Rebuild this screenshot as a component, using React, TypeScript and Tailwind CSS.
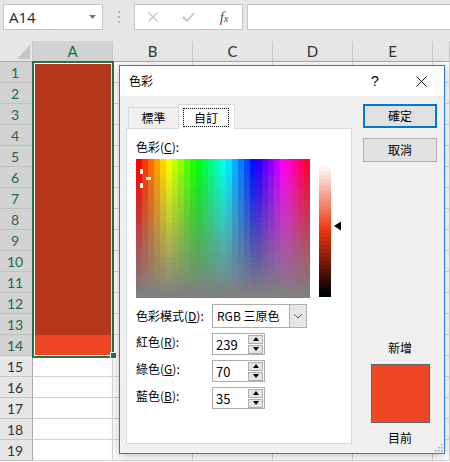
import React from "react";

const cjk = "font-['Noto_Sans_CJK_TC','Noto_Sans',sans-serif]";

function Spectrum() {
  const cols = 29;
  const rows = 24;
  const cw = 174 / cols;
  const rh = 139 / rows;
  const rects: React.ReactNode[] = [];
  for (let j = 0; j < rows; j++) {
    for (let i = 0; i < cols; i++) {
      const h = (i * 360) / cols;
      const s = 100 * (1 - j / (rows - 1));
      rects.push(
        <rect
          key={`${i}-${j}`}
          x={i * cw}
          y={j * rh}
          width={cw + 0.6}
          height={rh + 0.6}
          fill={`hsl(${h.toFixed(1)},${s.toFixed(1)}%,50%)`}
        />
      );
    }
  }
  return (
    <svg width="174" height="139" shapeRendering="crispEdges" className="block">
      {rects}
      <rect x="4" y="10" width="3" height="5" fill="#fff" />
      <rect x="10" y="18" width="5" height="3" fill="#fff" />
      <rect x="4" y="24" width="3" height="5" fill="#fff" />
    </svg>
  );
}

function LumBar() {
  const steps = 34;
  const h = 133 / steps;
  const rects: React.ReactNode[] = [];
  for (let k = 0; k < steps; k++) {
    const l = 100 * (1 - k / (steps - 1));
    rects.push(
      <rect key={k} x="0" y={4 + k * h} width="12" height={h + 0.6} fill={`hsl(10,86%,${l.toFixed(1)}%)`} />
    );
  }
  return (
    <svg width="22" height="139" shapeRendering="crispEdges" className="block">
      {rects}
      <polygon points="15,67 22,62.5 22,71.5" fill="#000" shapeRendering="auto" />
    </svg>
  );
}

function Spin({ v }: { v: string }) {
  return (
    <div className="flex h-[22px] w-[53px] items-center border border-[#adadad] bg-white pl-[3px] pr-[1px]">
      <span className="flex-1 text-[13px] leading-none text-black">{v}</span>
      <div className="flex flex-col gap-[1px]">
        <div className="flex h-[9px] w-[15px] items-center justify-center border border-[#adadad] bg-[#e5e5e5]">
          <svg width="6" height="4"><polygon points="0,4 6,4 3,0" fill="#000" /></svg>
        </div>
        <div className="flex h-[9px] w-[15px] items-center justify-center border border-[#adadad] bg-[#e5e5e5]">
          <svg width="6" height="4"><polygon points="0,0 6,0 3,4" fill="#000" /></svg>
        </div>
      </div>
    </div>
  );
}

function FormulaBar() {
  return (
    <div className="flex h-[41px] items-start bg-[#e6e6e6] pl-[3px] pt-[4px]">
      <div className="flex h-[26px] w-[100px] items-center justify-between border border-[#c6c6c6] bg-white pl-[5px] pr-[6px]">
        <span className="font-['Open_Sans',sans-serif] text-[15px] leading-none text-[#262626]">A14</span>
        <svg width="7" height="4"><polygon points="0,0 7,0 3.5,4" fill="#767676" /></svg>
      </div>
      <div className="flex h-[26px] w-[31px] flex-col items-center justify-center gap-[3px]">
        <span className="h-[2px] w-[2px] bg-[#b4b4b4]" />
        <span className="h-[2px] w-[2px] bg-[#b4b4b4]" />
        <span className="h-[2px] w-[2px] bg-[#b4b4b4]" />
      </div>
      <div className="flex h-[26px] w-[109px] items-center border border-[#c6c6c6] bg-white">
        <div className="flex w-[36px] justify-center">
          <svg width="10" height="10">
            <path d="M0.5 0.5 L9.5 9.5 M9.5 0.5 L0.5 9.5" stroke="#c3c3c3" strokeWidth="1.4" />
          </svg>
        </div>
        <div className="flex w-[36px] justify-center">
          <svg width="13" height="10">
            <path d="M1 5 L5 9 L12 1" stroke="#c3c3c3" strokeWidth="1.8" fill="none" />
          </svg>
        </div>
        <div className="flex w-[36px] justify-center">
          <span className="font-['Liberation_Serif',serif] text-[15px] italic leading-none text-[#505050]">
            f<span className="text-[11px]">x</span>
          </span>
        </div>
      </div>
      <div className="ml-[4px] h-[26px] flex-1 border border-r-0 border-[#c6c6c6] bg-white" />
    </div>
  );
}

const COLS = ["A", "B", "C", "D", "E", ""];
const ROWS = Array.from({ length: 19 }, (_, i) => i + 1);

function Sheet() {
  return (
    <div className="grid grid-cols-[33px_repeat(5,80px)_17px] auto-rows-[21px] font-['Lato',sans-serif]">
      <div className="relative border-b border-r border-b-[#ababab] border-r-[#c6c6c6] bg-[#e6e6e6]">
        <svg width="33" height="20" className="absolute left-0 top-0">
          <polygon points="17,18 30,4 30,18" fill="#c4c4c4" />
        </svg>
      </div>
      {COLS.map((c, i) => (
        <div
          key={`h${i}`}
          className={
            i === 0
              ? "flex items-center justify-center border-b border-r border-b-[#ababab] border-r-[#c6c6c6] bg-[#d2d2d2] text-[15px] text-[#1e6b41]"
              : "flex items-center justify-center border-b border-r border-b-[#ababab] border-r-[#c6c6c6] bg-[#e6e6e6] text-[15px] text-[#333]"
          }
        >
          {c}
        </div>
      ))}
      {ROWS.map((r) => (
        <React.Fragment key={r}>
          <div
            className={
              r <= 14
                ? "flex items-center justify-center border-b border-r border-b-[#c0c0c0] border-r-[#ababab] bg-[#d2d2d2] pr-[2px] text-[14px] text-[#1e6b41]"
                : "flex items-center justify-center border-b border-r border-b-[#c6c6c6] border-r-[#ababab] bg-[#e6e6e6] pr-[2px] text-[14px] text-[#333]"
            }
          >
            {r}
          </div>
          {COLS.map((_, i) => {
            if (i === 0 && r <= 13) return <div key={i} className="bg-[#b6371a]" />;
            if (i === 0 && r === 14) return <div key={i} className="bg-[#ef4623]" />;
            return <div key={i} className="border-b border-r border-[#d4d4d4] bg-white" />;
          })}
        </React.Fragment>
      ))}
    </div>
  );
}

function Dialog() {
  return (
    <div
      className={`absolute left-[119px] top-[65px] h-[389px] w-[326px] border border-[#2b7bd2] bg-[#f0f0f0] text-[12px] text-black shadow-[0_2px_10px_rgba(0,0,0,0.25)] ${cjk}`}
    >
      <div className="flex h-[30px] items-center bg-white pl-[9px]">
        <span className="leading-none">色彩</span>
        <div className="ml-auto flex h-[30px] w-[46px] items-center justify-center">
          <span className="font-['Liberation_Sans',sans-serif] text-[14px] leading-none">?</span>
        </div>
        <div className="flex h-[30px] w-[46px] items-center justify-center">
          <svg width="11" height="11">
            <path d="M0.5 0.5 L10.5 10.5 M10.5 0.5 L0.5 10.5" stroke="#111" strokeWidth="1" />
          </svg>
        </div>
      </div>
      <div className="flex pl-[6px] pt-[8px]">
        <div className="w-[226px]">
          <div className="relative z-10 flex h-[24px] items-end pl-[2px]">
            <div className="flex h-[21px] w-[50px] items-center justify-center border-l border-t border-[#d9d9d9] bg-[#f0f0f0] leading-none">
              標準
            </div>
            <div className="-mb-[1px] flex h-[25px] w-[57px] items-start border-l border-r border-t border-[#d9d9d9] bg-white pl-[4px] pt-[3px]">
              <span className="flex h-[19px] w-[46px] items-center justify-center border border-dotted border-black leading-none">
                自訂
              </span>
            </div>
          </div>
          <div className="h-[316px] border border-[#d9d9d9] bg-white pl-[9px] pt-[10px]">
            <div className="h-[16px] leading-[16px]">
              色彩(<u>C</u>):
            </div>
            <div className="mt-[4px] flex">
              <Spectrum />
              <div className="ml-[9px]">
                <LumBar />
              </div>
            </div>
            <div className="mt-[6px] flex h-[24px] items-center">
              <span className="w-[76px] leading-none">
                色彩模式(<u>D</u>):
              </span>
              <div className="flex h-[24px] w-[95px] border border-[#adadad] bg-white">
                <span className="flex flex-1 items-center pl-[4px] leading-none">RGB 三原色</span>
                <div className="flex w-[17px] items-center justify-center border-l border-[#adadad] bg-[#e5e5e5]">
                  <svg width="8" height="5">
                    <path d="M0.5 0.5 L4 4 L7.5 0.5" stroke="#555" strokeWidth="1" fill="none" />
                  </svg>
                </div>
              </div>
            </div>
            <div className="mt-[5px] flex h-[22px] items-center">
              <span className="w-[76px] pb-[5px] leading-none">
                紅色(<u>R</u>):
              </span>
              <Spin v="239" />
            </div>
            <div className="mt-[5px] flex h-[22px] items-center">
              <span className="w-[76px] pb-[5px] leading-none">
                綠色(<u>G</u>):
              </span>
              <Spin v="70" />
            </div>
            <div className="mt-[5px] flex h-[22px] items-center">
              <span className="w-[76px] pb-[5px] leading-none">
                藍色(<u>B</u>):
              </span>
              <Spin v="35" />
            </div>
          </div>
        </div>
        <div className="ml-[11px] flex w-[74px] flex-col items-center">
          <div className="flex h-[24px] w-[74px] items-center justify-center border-2 border-[#0078d7] bg-[#e1e1e1] leading-none">
            確定
          </div>
          <div className="mt-[10px] flex h-[24px] w-[74px] items-center justify-center border border-[#adadad] bg-[#e1e1e1] leading-none">
            取消
          </div>
          <span className="mt-[178px] leading-[16px]">新增</span>
          <div className="mt-[8px] h-[59px] w-[59px] border border-[#646464] bg-[#ef4623]" />
          <span className="mt-[7px] leading-[16px]">目前</span>
        </div>
      </div>
      <svg width="9" height="9" className="absolute bottom-[1px] right-[1px]">
        <rect x="7" y="1" width="1.5" height="1.5" fill="#a0a0a0" />
        <rect x="4" y="4" width="1.5" height="1.5" fill="#a0a0a0" />
        <rect x="7" y="4" width="1.5" height="1.5" fill="#a0a0a0" />
        <rect x="1" y="7" width="1.5" height="1.5" fill="#a0a0a0" />
        <rect x="4" y="7" width="1.5" height="1.5" fill="#a0a0a0" />
        <rect x="7" y="7" width="1.5" height="1.5" fill="#a0a0a0" />
      </svg>
    </div>
  );
}

export default function App() {
  return (
    <div className="relative h-[462px] w-[450px] overflow-hidden bg-white">
      <FormulaBar />
      <Sheet />
      <div className="absolute left-[32px] top-[61px] h-[297px] w-[82px] border-2 border-[#217346]">
        <div className="absolute inset-0 border border-white" />
      </div>
      <div className="absolute left-[110px] top-[352px] h-[7px] w-[7px] border border-white bg-[#217346]" />
      <Dialog />
    </div>
  );
}
